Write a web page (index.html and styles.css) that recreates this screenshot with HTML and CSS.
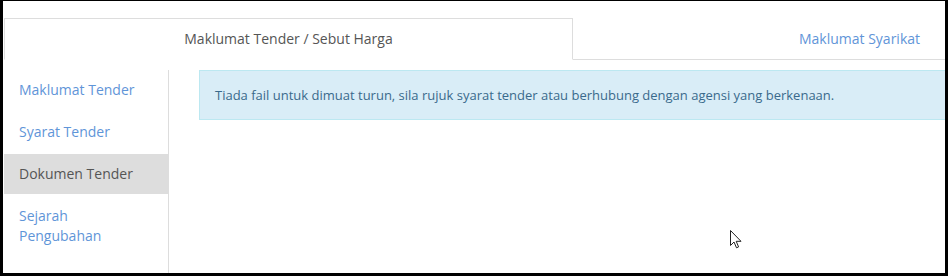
FILE: index.html
```html
<!DOCTYPE html>
<html>
<head>
<meta charset="utf-8">
<link rel="stylesheet" href="styles.css">
</head>
<body>
<div class="frame">
  <div class="page">
    <ul class="tabs">
      <li class="tab active"><a>Maklumat Tender / Sebut Harga</a></li>
      <li class="tab"><a>Maklumat Syarikat</a></li>
    </ul>
    <div class="tab-body">
      <ul class="side-nav">
        <li><a>Maklumat Tender</a></li>
        <li><a>Syarat Tender</a></li>
        <li class="active"><a>Dokumen Tender</a></li>
        <li><a>Sejarah Pengubahan</a></li>
      </ul>
      <div class="main">
        <div class="alert">Tiada fail untuk dimuat turun, sila rujuk syarat tender atau berhubung dengan agensi yang berkenaan.</div>
      </div>
    </div>
  </div>
  <svg class="cursor" width="12" height="19" viewBox="0 0 12 19"><path d="M0.5 0.5 L0.5 15.5 L4 12 L6.5 17.8 L8.6 16.9 L6.2 11.3 L11 11.3 Z" fill="#fff" stroke="#222" stroke-width="1" stroke-linejoin="round"/></svg>
</div>
</body>
</html>
```
FILE: styles.css
```css
html, body {
  margin: 0;
  padding: 0;
  background: #000;
}
.frame {
  position: relative;
  width: 948px;
  height: 276px;
  box-sizing: border-box;
  padding: 1px 3px 3px 3px;
}
.page {
  background: #fff;
  height: 272px;
  overflow: hidden;
  padding: 17px 0 0 1px;
  box-sizing: border-box;
  font-family: "Open Sans", "Liberation Sans", sans-serif;
  font-size: 13px;
  color: #555;
}
.tabs {
  list-style: none;
  margin: 0;
  padding: 0;
  display: flex;
  width: 1142px;
  border-bottom: 1px solid #ddd;
  font-size: 14px;
}
.tab {
  flex: 0 0 573px;
  margin-bottom: -1px;
}
.tab.active {
  flex-basis: 569px;
}
.tab a {
  display: block;
  text-align: center;
  padding: 10px 15px;
  line-height: 20px;
  border: 1px solid transparent;
  color: #5f95d8;
}
.tab.active a {
  border-color: #ddd;
  border-bottom-color: #fff;
  color: #555;
  background: #fff;
}
.tab-body {
  display: flex;
  width: 1138px;
  margin-top: 10px;
}
.side-nav {
  list-style: none;
  margin: 0;
  padding: 0;
  width: 164px;
  flex: none;
  font-size: 14px;
}
.side-nav li + li {
  margin-top: 2px;
}
.side-nav a {
  display: block;
  padding: 10px 30px 10px 15px;
  line-height: 20px;
  color: #5f95d8;
}
.side-nav li.active a {
  background: #ddd;
  color: #555;
}
.main {
  flex: 1;
  border-left: 1px solid #ddd;
  padding-left: 30px;
  min-height: 300px;
}
.alert {
  background: #d9edf7;
  border: 1px solid #bce8f1;
  color: #3a6a8c;
  padding: 14px 15px;
  line-height: 20px;
}
.cursor {
  position: absolute;
  left: 730px;
  top: 230px;
}
```
